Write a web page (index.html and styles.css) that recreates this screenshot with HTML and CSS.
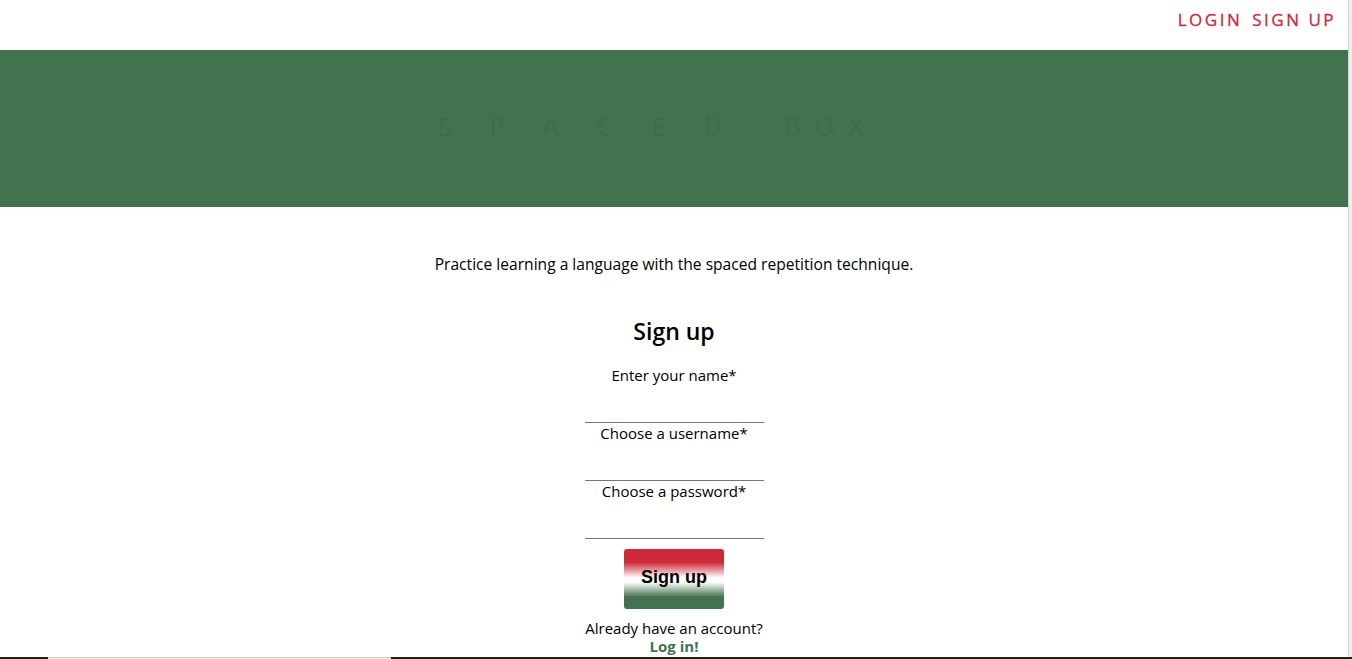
FILE: index.html
```html
<!DOCTYPE html>
<html lang="en">
<head>
<meta charset="utf-8">
<title>Spaced Box</title>
<link rel="stylesheet" href="styles.css">
</head>
<body>
<div class="page">
  <nav class="topnav">
    <a class="navlink" href="#">LOGIN</a>
    <a class="navlink" href="#">SIGN UP</a>
  </nav>
  <header class="banner">
    <h1 class="title">S P A C E D&nbsp; BOX</h1>
  </header>
  <main class="main">
    <p class="intro">Practice learning a language with the spaced repetition technique.</p>
    <form class="form">
      <h2 class="form-title">Sign up</h2>
      <label class="label" for="name">Enter your name*</label>
      <input class="field" id="name" type="text">
      <label class="label" for="user">Choose a username*</label>
      <input class="field" id="user" type="text">
      <label class="label" for="pass">Choose a password*</label>
      <input class="field" id="pass" type="password">
      <button class="btn" type="button">Sign up</button>
      <p class="already">Already have an account?</p>
      <a class="login-link" href="#">Log in!</a>
    </form>
  </main>
</div>
<div class="vscroll"></div>
<div class="hscroll"><div class="hthumb"></div></div>
</body>
</html>
```
FILE: styles.css
```css
* { box-sizing: border-box; }
html, body { margin: 0; padding: 0; }
body {
  font-family: "Open Sans", "DejaVu Sans", sans-serif;
  color: #000;
  background: #fff;
  overflow: hidden;
}
.page { width: 1348px; }
.topnav {
  height: 50px;
  display: flex;
  justify-content: flex-end;
  align-items: center;
  gap: 10px;
  padding: 0 12px 12px 0;
}
.navlink {
  color: #ce2939;
  text-decoration: none;
  font-size: 17px;
  font-weight: 500;
  letter-spacing: 2.5px;
  -webkit-text-stroke: 0.3px #ce2939;
}
.banner {
  height: 157px;
  background: #43724f;
  display: flex;
  align-items: center;
  justify-content: center;
}
.title {
  margin: 0 0 6px;
  font-weight: 400;
  font-size: 25px;
  letter-spacing: 14px;
  word-spacing: 4px;
  color: #3f6d4b;
  padding-right: 34px;
}
.main {
  display: flex;
  flex-direction: column;
  align-items: center;
}
.intro {
  margin: 47px 0 0;
  font-size: 15.6px;
  line-height: 20px;
}
.form {
  display: flex;
  flex-direction: column;
  align-items: center;
  margin-top: 42px;
}
.form-title {
  margin: 0 0 20px;
  font-size: 23px;
  font-weight: 600;
  line-height: 30px;
}
.label {
  font-size: 15px;
  line-height: 18px;
}
.field {
  width: 179px;
  height: 39px;
  border: none;
  border-bottom: 1px solid #767676;
  outline: none;
  background: transparent;
  margin: 0 0 1px;
}
.btn {
  margin-top: 9px;
  width: 100px;
  height: 60px;
  border: none;
  border-radius: 3px;
  background: linear-gradient(to bottom, #ce2939 0%, #ce2939 22%, #ffffff 48%, #ffffff 55%, #43724f 80%, #43724f 100%);
  font-family: "Liberation Sans", Arial, sans-serif;
  font-weight: 700;
  font-size: 18px;
  color: #000;
  padding: 0 0 3px;
}
.already {
  margin: 10px 0 0;
  font-size: 15px;
  line-height: 18px;
}
.login-link {
  color: #43724f;
  font-weight: 700;
  font-size: 15px;
  line-height: 18px;
  text-decoration: none;
}
.vscroll {
  position: fixed;
  top: 0;
  right: 0;
  width: 4px;
  height: 100%;
  background: #eeeeee;
  border-left: 1px solid #d4d4d4;
}
.hscroll {
  position: fixed;
  left: 0;
  bottom: 0;
  width: 100%;
  height: 2px;
  background: #1e1e1e;
}
.hthumb {
  margin-left: 48px;
  width: 343px;
  height: 2px;
  background: #f0f0f0;
  border-top: 1px solid #c4c4c4;
}
```
